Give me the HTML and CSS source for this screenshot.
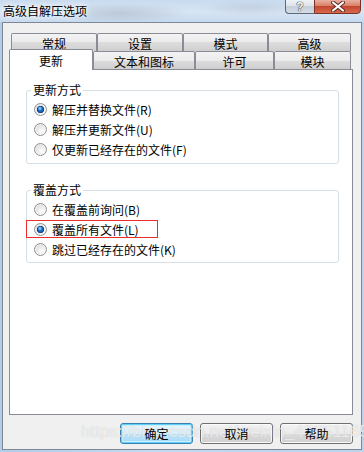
FILE: index.html
```html
<!DOCTYPE html>
<html lang="zh-CN">
<head>
<meta charset="utf-8">
<title>高级自解压选项</title>
<link rel="stylesheet" href="styles.css">
</head>
<body>
<div class="window">
  <div class="titlebar">
    <span class="title">高级自解压选项</span>
    <div class="caption">
      <span class="cap help">?</span>
      <span class="cap close">
        <svg width="14" height="11" viewBox="0 0 14 11">
          <path d="M2 1.5 L12 9.5 M12 1.5 L2 9.5" stroke="#5a2a22" stroke-width="4" stroke-linecap="round"/>
          <path d="M2 1.5 L12 9.5 M12 1.5 L2 9.5" stroke="#ffffff" stroke-width="2.2" stroke-linecap="round"/>
        </svg>
      </span>
    </div>
  </div>
  <div class="client">
    <div class="tabs">
      <div class="row row1">
        <span class="tab t-a">常规</span>
        <span class="tab t-b">设置</span>
        <span class="tab t-c">模式</span>
        <span class="tab t-d">高级</span>
      </div>
      <div class="row row2">
        <span class="tab sel t-e">更新</span>
        <span class="tab t-f">文本和图标</span>
        <span class="tab t-g">许可</span>
        <span class="tab t-h">模块</span>
      </div>
    </div>
    <div class="panel">
      <fieldset class="group g1">
        <legend>更新方式</legend>
        <div class="opts">
          <div class="opt"><span class="radio on"></span><span>解压并替换文件(R)</span></div>
          <div class="opt"><span class="radio"></span><span>解压并更新文件(U)</span></div>
          <div class="opt"><span class="radio"></span><span>仅更新已经存在的文件(F)</span></div>
        </div>
      </fieldset>
      <fieldset class="group g2">
        <legend>覆盖方式</legend>
        <div class="opts">
          <div class="opt"><span class="radio"></span><span>在覆盖前询问(B)</span></div>
          <div class="opt mark"><span class="radio on"></span><span>覆盖所有文件(L)</span></div>
          <div class="opt"><span class="radio"></span><span>跳过已经存在的文件(K)</span></div>
        </div>
      </fieldset>
    </div>
    <div class="buttons">
      <span class="btn def"><span class="btn-label">确定</span></span>
      <span class="btn"><span class="btn-label">取消</span></span>
      <span class="btn"><span class="btn-label">帮助</span></span>
    </div>
    <div class="watermark">https://blog.csdn.net/weixin_42851165</div>
  </div>
</div>
</body>
</html>
```

FILE: styles.css
```css
* { box-sizing: border-box; }
html, body { margin: 0; padding: 0; }
body {
  width: 364px;
  height: 452px;
  overflow: hidden;
  font-family: "Noto Sans CJK SC", "Noto Sans", sans-serif;
  font-size: 12px;
  color: #000;
  background: #bcd2ea;
}
.window {
  width: 364px;
  height: 452px;
  display: flex;
  flex-direction: column;
  background: linear-gradient(90deg, #b4cce8 0%, #c4d8ee 40%, #bdd3ec 100%);
}
.titlebar {
  height: 22px;
  flex: none;
  display: flex;
  align-items: flex-start;
  background:
    radial-gradient(ellipse 70px 10px at 120px 13px, rgba(140,150,165,0.35), transparent),
    radial-gradient(ellipse 50px 8px at 250px 8px, rgba(150,160,175,0.25), transparent),
    linear-gradient(180deg, #c9dbef 0%, #d7e5f4 55%, #c6d9ee 100%);
}
.title {
  padding: 3px 0 0 3px;
  line-height: 16px;
  font-size: 12px;
  text-shadow: 0 0 4px #ffffff, 0 0 8px #ffffff;
}
.caption {
  margin-left: auto;
  margin-right: 3px;
  margin-top: -1px;
  display: flex;
}
.cap {
  height: 15px;
  display: flex;
  align-items: center;
  justify-content: center;
  border: 1px solid #5c6a7c;
}
.help {
  width: 29px;
  border-right: none;
  border-radius: 0 0 0 4px;
  background: linear-gradient(#eef2f7, #dde3ea 50%, #c7cfd9 50%, #d3dbe5);
  color: #f4f6f8;
  font-family: "Liberation Sans", sans-serif;
  font-weight: bold;
  font-size: 12px;
  line-height: 12px;
  text-shadow: 0 0 1px #3a4656, 0 0 1px #3a4656, 0 0 1px #3a4656;
}
.close {
  width: 47px;
  border-color: #7a3228;
  border-radius: 0 0 4px 0;
  background: linear-gradient(#eab0a2, #d98068 45%, #c4472f 50%, #d66a4c 100%);
}
.client {
  flex: 1;
  margin: 0 2px 2px;
  border: 1px solid #7c8896;
  background: #f0f0f0;
  position: relative;
  display: flex;
  flex-direction: column;
  padding: 10px 8px 5px 6px;
}
.row {
  display: flex;
  height: 18px;
}
.row1 { margin-left: 2px; }
.row2 { align-items: flex-end; }
.tab {
  height: 18px;
  border: 1px solid #898c95;
  border-bottom: none;
  border-radius: 2px 2px 0 0;
  background: linear-gradient(#f3f3f3, #ebebeb 50%, #dddddd 50%, #cfcfcf);
  text-align: center;
  line-height: 15px;
  padding-top: 2px;
  flex: none;
}
.tab.sel {
  height: 21px;
  margin-bottom: -1px;
  background: #ffffff;
  position: relative;
  z-index: 1;
  padding-top: 3px;
}
.t-a { width: 86px; }
.t-b { width: 86px; }
.t-c { width: 85px; }
.t-d { width: 83px; }
.t-e { width: 84px; }
.t-f { width: 102px; }
.t-g { width: 79px; }
.t-h { width: 77px; }
.panel {
  height: 346px;
  flex: none;
  border: 1px solid #898c95;
  background: #ffffff;
  padding: 13px 13px 0 16px;
}
.group {
  margin: 0;
  padding: 2px 0 4px;
  border: 1px solid #d5dfe5;
  border-radius: 3px;
  min-width: 0;
  width: 313px;
}
.group.g2 {
  margin-top: 19px;
  padding-bottom: 3px;
}
.group legend {
  margin-left: 4px;
  padding: 0 2px;
  line-height: 14px;
}
.opts { padding-left: 7px; }
.opt {
  display: flex;
  align-items: center;
  height: 20px;
  gap: 5px;
  white-space: nowrap;
}
.opt.mark {
  margin-left: -9px;
  padding-left: 9px;
  width: 134px;
  outline: 1px solid #ec2b2b;
  outline-offset: -2px;
}
.radio {
  width: 13px;
  height: 13px;
  flex: none;
  border-radius: 50%;
  border: 1px solid #8e9194;
  background: radial-gradient(circle at 62% 65%, #fefefe 0, #ececec 40%, #cfcfcf 100%);
  box-shadow: inset 0 0 0 1px rgba(255,255,255,0.6);
}
.radio.on {
  background:
    radial-gradient(circle at 45% 40%, #b9e4ff 0, rgba(120,190,245,0.9) 1px, transparent 2.2px),
    radial-gradient(circle at 50% 50%, #2f86d8 0, #1a5fb4 2.3px, #0c3f82 3.4px, transparent 3.9px),
    radial-gradient(circle at 62% 65%, #fefefe 0, #ececec 40%, #cfcfcf 100%);
}
.buttons {
  display: flex;
  justify-content: flex-end;
  gap: 7px;
  margin-top: 8px;
}
.btn {
  width: 73px;
  height: 21px;
  border: 1px solid #707070;
  border-radius: 3px;
  background: linear-gradient(#f2f2f2, #ebebeb 50%, #dddddd 50%, #cfcfcf);
  box-shadow: inset 0 0 0 1px #fbfbfb;
  display: flex;
  align-items: center;
  justify-content: center;
  line-height: 14px;
}
.btn-label {
  position: relative;
  z-index: 3;
}
.btn.def {
  border-color: #3c7fb1;
  background: linear-gradient(#eaf6fd, #d9f0fc 50%, #bee6fd 50%, #a7d9f5);
  box-shadow: inset 0 0 0 1px #5fd0f7, inset 0 0 0 2px #c9eefc;
}
.watermark {
  position: absolute;
  left: 78px;
  top: 399px;
  font-family: "Liberation Sans", sans-serif;
  font-size: 17px;
  line-height: 20px;
  color: rgba(255,255,255,0.7);
  text-shadow: 0 0 1px rgba(160,160,160,0.6);
  pointer-events: none;
  white-space: nowrap;
  z-index: 2;
}
```
